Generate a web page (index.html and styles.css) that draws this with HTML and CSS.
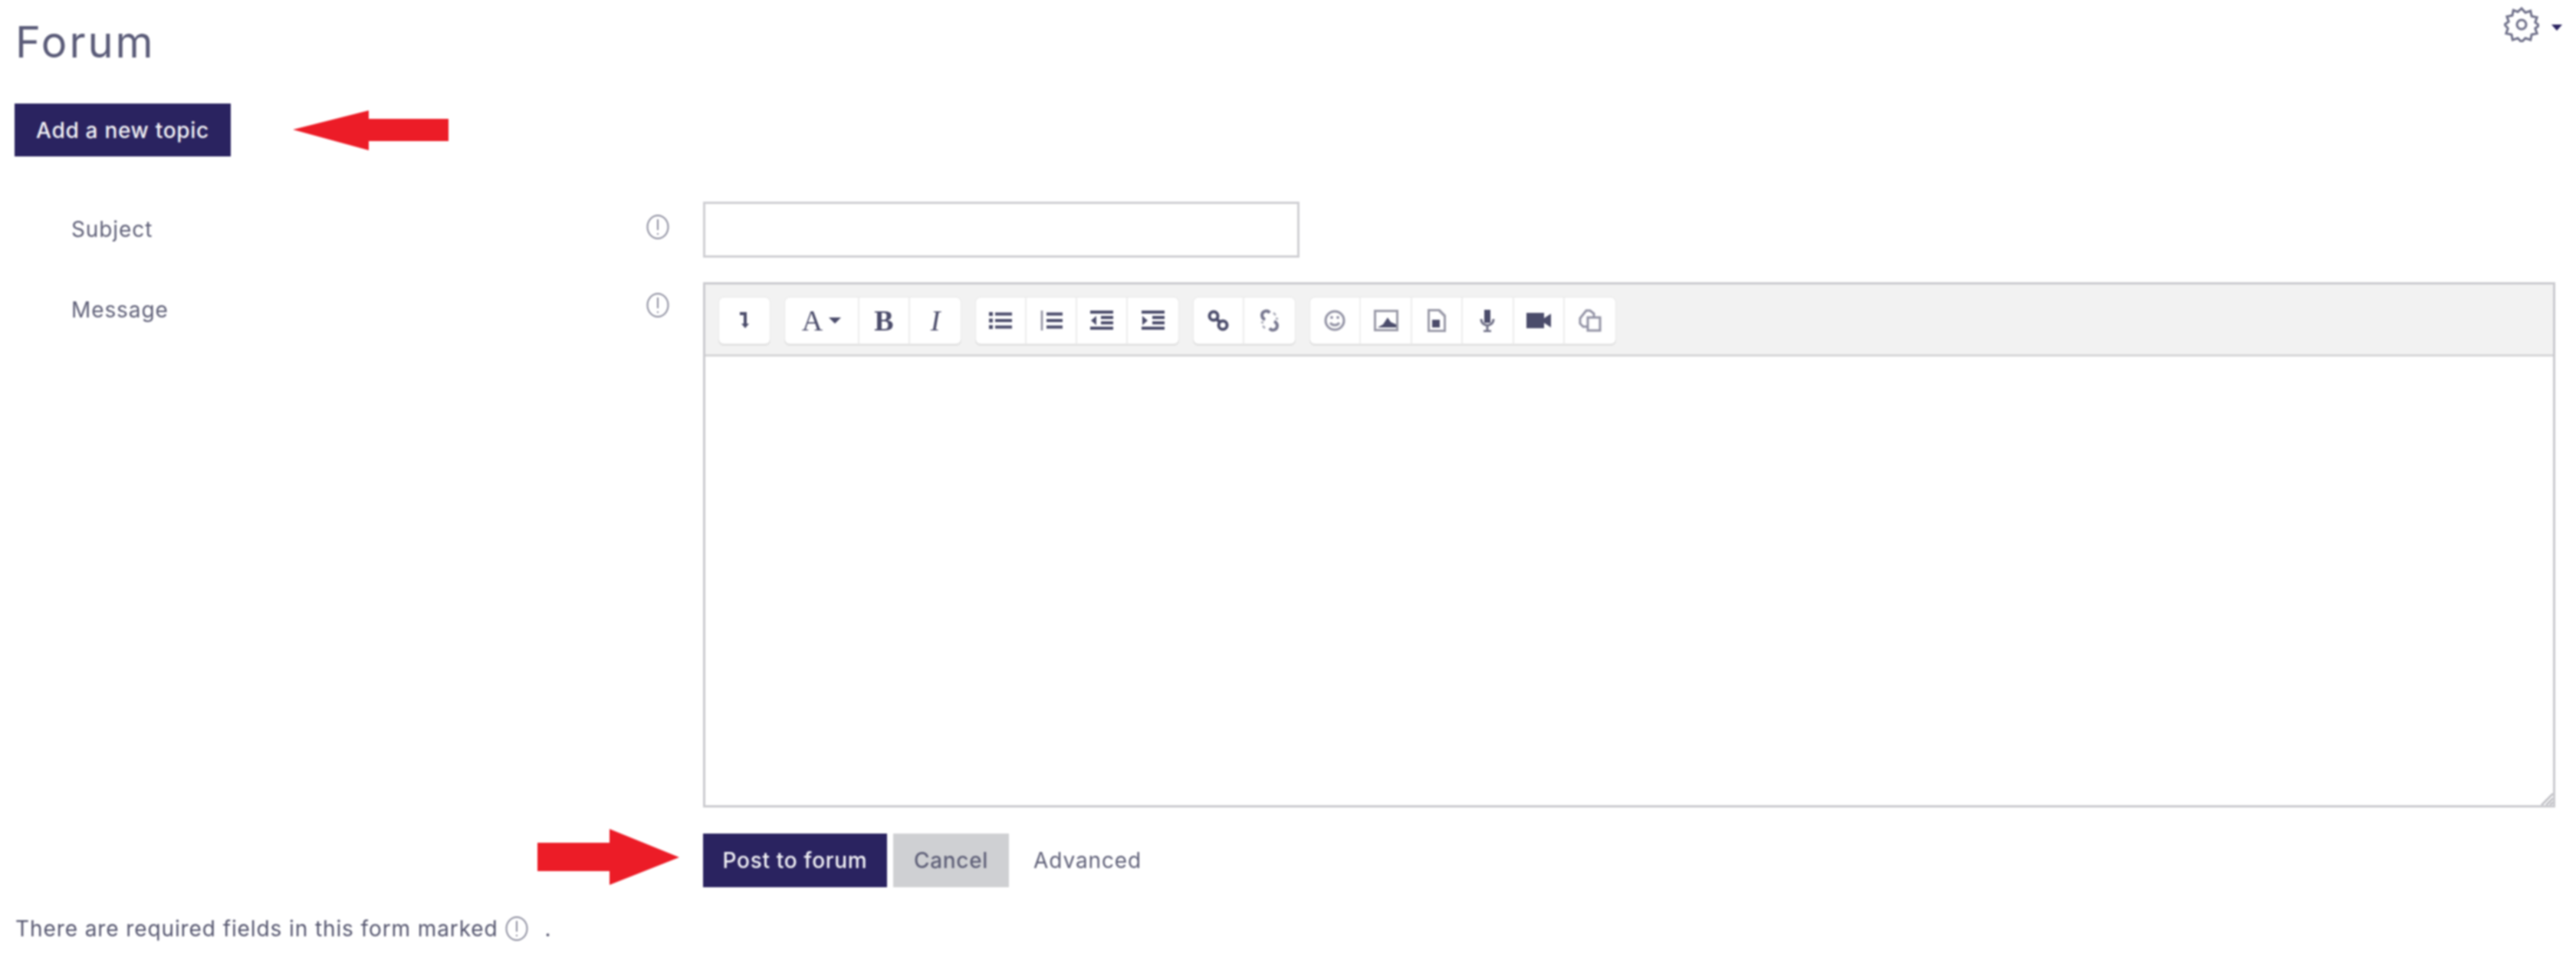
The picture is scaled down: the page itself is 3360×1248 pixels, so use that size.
FILE: index.html
```html
<!DOCTYPE html>
<html lang="en">
<head>
<meta charset="utf-8">
<title>Forum</title>
<link rel="stylesheet" href="styles.css">
</head>
<body>
<div class="page">
  <header class="page-head">
    <h1 class="title">Forum</h1>
    <div class="settings">
      <svg class="gear" viewBox="0 0 46 46"><path d="M23 2l5 5.500 6.700-2.300 1.400 7 7 1.400-2.300 6.700 5.200 3.700-5.200 4 2.300 6.700-7 1.400-1.400 7-6.700-2.300-5 5.100-5-5.100-6.700 2.300-1.400-7-7-1.400 2.300-6.700L1 23l5.200-3.700-2.300-6.700 7-1.400 1.400-7L18 6.500z"/><circle cx="23" cy="23" r="6"/></svg>
      <span class="caret"></span>
    </div>
  </header>

  <div class="add-row">
    <button class="btn btn-primary btn-add">Add a new topic</button>
    <svg class="arrow arrow-left" viewBox="0 0 203 52"><path d="M0 25L99 0v11h104v29H99v12z"/></svg>
  </div>

  <form class="form">
    <label class="label">Subject</label>
    <svg class="info" viewBox="0 0 34 34"><ellipse cx="17" cy="17" rx="13.500" ry="15"/><path d="M17 7v14M17 25v2"/></svg>
    <div class="input"></div>

    <label class="label label-msg">Message</label>
    <svg class="info info-msg" viewBox="0 0 34 34"><ellipse cx="17" cy="17" rx="13.500" ry="15"/><path d="M17 7v14M17 25v2"/></svg>
    <div class="editor">
      <div class="toolbar">
        <div class="group">
          <span class="tool"><svg viewBox="0 0 30 30"><path class="ln" d="M9 6h7v16"/><path class="fl" d="M11 19h10l-5 6z"/></svg></span>
        </div>
        <div class="group">
          <span class="tool tool-font"><span class="glyph">A</span><span class="tool-caret"></span></span>
          <span class="tool"><b class="glyph">B</b></span>
          <span class="tool"><i class="glyph">I</i></span>
        </div>
        <div class="group">
          <span class="tool"><svg viewBox="0 0 30 30"><path class="fl" d="M0 4h5v5H0zM0 12.500h5v5H0zM0 21h5v5H0z"/><path class="ln" d="M8 6.500h22M8 15h22M8 23.500h22"/></svg></span>
          <span class="tool"><svg viewBox="0 0 30 30"><path class="thin" d="M3 2v26"/><path class="ln" d="M9 6.500h21M9 15h21M9 23.500h21"/></svg></span>
          <span class="tool"><svg viewBox="0 0 30 30"><path class="ln" d="M0 4h30M14 11h16M14 18h16M0 25h30"/><path class="fl" d="M8 9v12l-7-6z"/></svg></span>
          <span class="tool"><svg viewBox="0 0 30 30"><path class="ln" d="M0 4h30M14 11h16M14 18h16M0 25h30"/><path class="fl" d="M1 9v12l7-6z"/></svg></span>
        </div>
        <div class="group">
          <span class="tool"><svg viewBox="0 0 30 30"><g class="ln"><circle cx="9" cy="9" r="5.500"/><circle cx="21" cy="21" r="5.500"/><path d="M12 12l6 6"/></g></svg></span>
          <span class="tool muted"><svg viewBox="0 0 30 30"><g class="ln"><path d="M15 5a5.500 5.500 0 0 0-10 3c0 3 2 5 4 6"/><path d="M15 25a5.500 5.500 0 0 0 10-3c0-3-2-5-4-6"/></g><path class="thin" d="M20 5l3 3M6 22l3 3M23 12l3 1M4 17l3 1"/></svg></span>
        </div>
        <div class="group">
          <span class="tool muted"><svg viewBox="0 0 30 30"><g class="ln2"><circle cx="15" cy="15" r="12"/><path d="M9 18c3 4 9 4 12 0"/></g><path class="fl" d="M9.500 9.500h3v3h-3zM17.500 9.500h3v3h-3z"/></svg></span>
          <span class="tool"><svg class="wide" viewBox="0 0 34 30"><path class="grey" d="M1 1h32v28H1z"/><path class="white" d="M4 4h26v22H4z"/><path class="fl" d="M6 24l7-4 6-9 4 6 7 3v4z"/></svg></span>
          <span class="tool"><svg viewBox="0 0 30 30"><path class="grey" d="M3 0h16l8 8v22H3z"/><path class="white" d="M6 3h11l7 7v17H6z"/><path class="fl" d="M9 14h10v10H9z"/></svg></span>
          <span class="tool"><svg viewBox="0 0 30 30"><path class="fl" d="M11 1h8v17h-8z"/><path class="ln2" d="M7 13c0 11 16 11 16 0M15 22v7M10 29h10"/></svg></span>
          <span class="tool"><svg class="wide" viewBox="0 0 34 30"><path class="fl" d="M1 5h23v20H1zM24 12l9-6v18l-9-6z"/></svg></span>
          <span class="tool muted"><svg viewBox="0 0 30 30"><g class="ln2"><path d="M12 23H6l-4-4v-7L10 2h5l5 4v5"/><path d="M12 11h16v17H12z"/></g></svg></span>
        </div>
      </div>
      <div class="editor-body"><svg class="grip" viewBox="0 0 16 16"><path d="M16 1L1 16M16 7l-9 9M16 12l-4 4"/></svg></div>
    </div>

    <div class="actions-lead">
      <svg class="arrow arrow-right" viewBox="0 0 185 73"><path d="M185 37L94 0v18H0v37h94v18z"/></svg>
    </div>
    <div class="actions">
      <button type="button" class="btn btn-primary btn-post">Post to forum</button>
      <button type="button" class="btn btn-cancel">Cancel</button>
      <a class="advanced">Advanced</a>
    </div>
  </form>

  <p class="required">There are required fields in this form marked<svg class="info info-inline" viewBox="0 0 34 34"><ellipse cx="17" cy="17" rx="13.500" ry="15"/><path d="M17 7v14M17 25v2"/></svg><span class="dot">.</span></p>
</div>
</body>
</html>
```

FILE: styles.css
```css
* { box-sizing: border-box; }
html, body { margin: 0; padding: 0; background: #fff; }
body { width: 3360px; height: 1248px; overflow: hidden; }
.page {
  padding: 0 18px 0 19px;
  font-family: Inter, "Liberation Sans", sans-serif;
  font-size: 28px;
  letter-spacing: 0.9px;
  color: #5a5b75;
  filter: blur(0.9px);
}
.page-head {
  display: flex;
  justify-content: space-between;
  align-items: flex-start;
  height: 135px;
}
.title {
  margin: 21px 0 0 1px;
  font-size: 56px;
  line-height: 68px;
  font-weight: 400;
  letter-spacing: 3px;
  color: #5a5b78;
}
.settings { display: flex; align-items: center; gap: 16px; margin-top: 9px; }
.gear { width: 46px; height: 46px; fill: none; stroke: #6e6f89; stroke-width: 3; }
.caret {
  width: 0; height: 0;
  border-left: 7px solid transparent;
  border-right: 7px solid transparent;
  border-top: 8px solid #2a2360;
  margin-top: 7px;
}
.add-row { display: flex; align-items: center; gap: 81px; height: 69px; margin-bottom: 59px; }
.btn {
  border: 0;
  border-radius: 0;
  font-family: inherit;
  font-size: 28px;
  letter-spacing: 0.7px;
  font-weight: 500;
  padding: 0;
}
.btn-primary { background: #2a2360; color: #f2f2f6; }
.btn-add { width: 282px; height: 69px; }
.arrow { fill: #ec1c27; }
.arrow-left { width: 203px; height: 52px; }
.form {
  display: grid;
  grid-template-columns: 822px 76px 1fr;
  row-gap: 32px;
  padding-right: 9px;
}
.label { padding: 20px 0 0 74px; line-height: 32px; color: #5f6078; }
.label-msg { padding-top: 20px; }
.info { width: 34px; height: 34px; fill: none; stroke: #8c8d9e; stroke-width: 2; margin-top: 16px; }
.info-msg { margin-top: 13px; }
.input { width: 778px; height: 73px; border: 3px solid #cfcfd3; background: #fff; }
.editor { border: 3px solid #cbcbcf; display: flex; flex-direction: column; height: 685px; }
.toolbar {
  display: flex;
  gap: 20px;
  height: 94px;
  padding: 17px 0 0 18px;
  background: #f2f2f2;
  border-bottom: 3px solid #d6d6d8;
}
.group {
  display: flex;
  height: 60px;
  background: #fff;
  box-shadow: 0 0 0 1px #e8e8e8, 0 2px 0 1px #e2e2e2;
  border-radius: 6px;
}
.tool {
  width: 66px;
  display: flex;
  align-items: center;
  justify-content: center;
  gap: 8px;
  border-right: 2px solid #ececec;
  color: #4b4c6b;
}
.tool:last-child { border-right: 0; }
.group:last-child .tool { width: 66.4px; }
.tool svg { width: 30px; height: 30px; }
.tool svg.wide { width: 34px; }
.tool-font { width: 97px; }
.glyph { font-family: "Liberation Serif", serif; font-size: 38px; line-height: 1; letter-spacing: 0; }
.tool-caret {
  width: 0; height: 0;
  border-left: 8px solid transparent;
  border-right: 8px solid transparent;
  border-top: 8px solid #4b4c6b;
}
.ln { fill: none; stroke: #4b4c6b; stroke-width: 4; }
.ln2 { fill: none; stroke: #6f7087; stroke-width: 3; }
.fl { fill: #4b4c6b; }
.thin { fill: none; stroke: #8c8d9e; stroke-width: 2.500; }
.grey { fill: #9a9aa8; }
.white { fill: #fff; }
.muted { opacity: 0.75; }
.editor-body { flex: 1; background: #fff; display: flex; justify-content: flex-end; align-items: flex-end; }
.grip { width: 16px; height: 16px; fill: none; stroke: #bdbdc2; stroke-width: 2.500; }
.actions-lead { grid-column: 1 / 3; display: flex; justify-content: flex-end; padding-right: 31px; }
.arrow-right { width: 185px; height: 73px; margin-top: -4px; }
.actions { display: flex; align-items: center; gap: 8px; height: 70px; margin-top: 2px; }
.btn-post { width: 240px; height: 70px; }
.btn-cancel { width: 151px; height: 70px; background: #cfd0d3; color: #5f6078; }
.advanced { margin-left: 24px; color: #5f6078; }
.required { display: flex; align-items: center; margin: 37px 0 0 1px; line-height: 34px; color: #55566f; }
.info-inline { margin: 0 0 0 7px; }
.dot { margin-left: 20px; }
```
